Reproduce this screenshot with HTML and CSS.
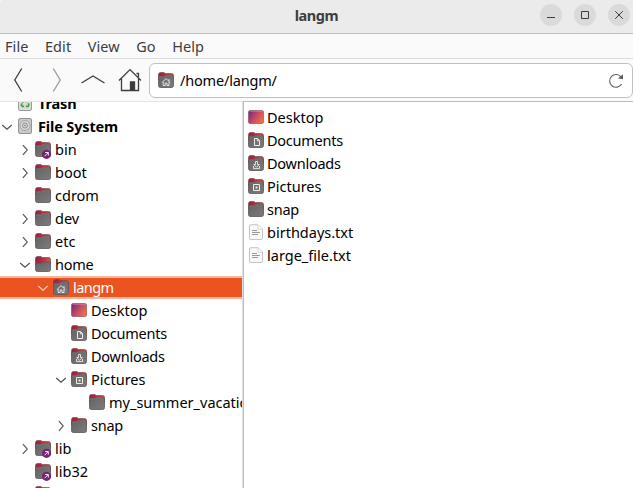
FILE: index.html
```html
<!DOCTYPE html>
<html lang="en">
<head>
<meta charset="utf-8">
<title>langm</title>
<link rel="stylesheet" href="styles.css">
</head>
<body>
<svg class="defs" aria-hidden="true">
  <defs>
    <linearGradient id="g-body" x1="0" y1="0" x2="1" y2="1"><stop offset="0" stop-color="#666164"/><stop offset="1" stop-color="#7c7c7c"/></linearGradient>
    <linearGradient id="g-tab" x1="0" y1="0" x2="1" y2="0"><stop offset="0" stop-color="#8f2148"/><stop offset=".45" stop-color="#b52c40"/><stop offset="1" stop-color="#d4583a"/></linearGradient>
    <linearGradient id="g-desk" x1="0" y1="0.2" x2="1" y2="0.8"><stop offset="0" stop-color="#7b2a78"/><stop offset=".5" stop-color="#cc4a66"/><stop offset="1" stop-color="#f0763f"/></linearGradient>
  </defs>
  <symbol id="folder" viewBox="0 0 16 18">
    <path d="M.5 3Q.5.6 2.3.6H6l1.2 1h6.5q1.8 0 1.8 1.8V8H.5z" fill="url(#g-tab)" stroke="#7b4448" stroke-width=".7"/>
    <path d="M.5 5.4q0-.8.9-.8h4.5l1.4-1.2h6.4q1.8 0 1.8 1.4v8.7q0 2-1.8 2H2.3q-1.8 0-1.8-2z" fill="url(#g-body)" stroke="#5c5759" stroke-width=".8"/>
    <path d="M1.2 5h4.9l1.4-1.2h6.9" fill="none" stroke="#948487" stroke-width=".5"/>
  </symbol>
  <symbol id="folder-open" viewBox="0 0 16 18">
    <path d="M.5 3Q.5.6 2.3.6H6l1.2 1h6.5q1.8 0 1.8 1.8V9H.5z" fill="url(#g-tab)" stroke="#69414a" stroke-width=".7"/>
    <path d="M.5 7.3h5.7l1.4-1h7.9v7.2q0 2-1.8 2H2.3q-1.8 0-1.8-2z" fill="url(#g-body)" stroke="#5c5759" stroke-width=".8"/>
  </symbol>
  <symbol id="home-folder" viewBox="0 0 16 18"><use href="#folder" width="16" height="18"/><path d="M3.9 10.6 8.1 6.6l4.2 4M5.2 10v3.5h2V11h1.8v2.5h2V10M11 7v2" fill="none" stroke="#eee" stroke-width=".9"/></symbol>
  <symbol id="docs" viewBox="0 0 16 18"><use href="#folder" width="16" height="18"/><path d="M6.5 6.5h3l2 2v5h-5zM9.3 6.6v2.2h2.2" fill="none" stroke="#eee"/></symbol>
  <symbol id="downs" viewBox="0 0 16 18"><use href="#folder" width="16" height="18"/><path d="M7.5 6.5h2v3h1.8l-2.8 2.8-2.8-2.8h1.8zM5.5 11v2.6h6V11" fill="none" stroke="#eee" stroke-width=".9"/></symbol>
  <symbol id="pics" viewBox="0 0 16 18"><use href="#folder" width="16" height="18"/><path d="M5.5 6.5h6v6h-6z" fill="none" stroke="#eee" stroke-width="1"/><path d="M7.5 8.5h2v2h-2z" fill="#eee"/></symbol>
  <symbol id="link-folder" viewBox="0 0 16 18"><use href="#folder" width="16" height="18"/><circle cx="11.5" cy="13.3" r="4.6" fill="#772477"/><path d="M9.6 15.2l3.5-3.5M10.2 11.5h3.1v3.1" fill="none" stroke="#fff" stroke-width=".9"/></symbol>
  <symbol id="desk" viewBox="0 0 16 18"><rect x=".5" y="1.5" width="15" height="13" rx="1.6" fill="url(#g-desk)" stroke="#8b4b66" stroke-opacity=".65"/><path d="M1.5 2.4h13" stroke="#fff" stroke-opacity=".25"/></symbol>
  <symbol id="txt" viewBox="0 0 16 18"><path d="M1.5 2q0-1.3 1.3-1.3h7.4l4.3 4.3v9.2q0 1.3-1.3 1.3H2.8q-1.3 0-1.3-1.3z" fill="#f8f8f8" stroke="#c4c4c4"/><path d="M10 1v4.2h4.3" fill="#fff" stroke="#ccc" stroke-width=".8"/><path d="M4 6.5h5M4 8.5h8M4 10.5h6" stroke="#999"/></symbol>
  <symbol id="disk" viewBox="0 0 14 16"><rect x=".5" y=".5" width="13" height="15" rx="1.5" fill="#c9c9c9" stroke="#949494"/><circle cx="7" cy="7.5" r="5" fill="#d8d8d8" stroke="#999" stroke-width=".8"/><circle cx="7" cy="7.5" r="2.6" fill="#ccc" stroke="#888" stroke-width=".8"/><circle cx="7" cy="7.5" r=".8" fill="#888"/></symbol>
  <symbol id="bin" viewBox="0 0 14 16"><rect x=".5" y=".5" width="13" height="15" rx="1.5" fill="#dcdcdc" stroke="#9b9b9b"/><path d="M4.4 7.6 6.1 5.3h2L9.3 7M10.3 8.2l.6 1.7-.9 1.5H7.9M6.1 11.4H4.3L3.3 10l.9-1.7" fill="none" stroke="#3da639" stroke-width="1.6"/></symbol>
  <symbol id="down" viewBox="0 0 12 12"><path d="M1.2 4 6 8.2 10.8 4" fill="none" stroke="currentColor" stroke-width="1.1"/></symbol>
  <symbol id="right" viewBox="0 0 12 12"><path d="M3.9 1.2 8.2 6 3.9 10.8" fill="none" stroke="currentColor" stroke-width="1.1"/></symbol>
</svg>

<header class="titlebar">
  <h1>langm</h1>
  <div class="controls">
    <button aria-label="Minimize"><svg viewBox="0 0 22 22"><path d="M7 13.5h8"/></svg></button>
    <button aria-label="Maximize"><svg viewBox="0 0 22 22"><path d="M7.5 7.5h7v7h-7z"/></svg></button>
    <button aria-label="Close"><svg viewBox="0 0 22 22"><path d="m7.2 7.2 7.6 7.6m0-7.6-7.6 7.6"/></svg></button>
  </div>
</header>
<nav class="menubar"><span>File</span><span>Edit</span><span>View</span><span>Go</span><span>Help</span></nav>
<div class="toolbar">
  <svg class="nav" viewBox="0 0 150 42">
    <path d="M21.7 9.5 14.8 21l6.9 11.5"/>
    <path class="off" d="M53.3 9.5 60.2 21l-6.9 11.5"/>
    <path d="m81.5 24 11.5-7 11.5 7"/>
    <path d="M119 21.5 130 10.6l11 10.9M121.5 19.5v12h17v-12M138.5 18v-3.5h-2"/>
    <path class="door" d="M130.5 31V23h4v8z"/>
  </svg>
  <div class="path">
    <svg class="icon"><use href="#home-folder"/></svg>
    <span>/home/langm/</span>
    <svg class="reload" viewBox="0 0 16 16"><path d="M13.6 11A6.4 6.4 0 1 1 13 3.8"/><path class="head" d="M15 1.2v5l-5-.6z"/></svg>
  </div>
</div>
<main class="panes">
  <ul class="tree">
    <li class="row bold"><i class="tw"></i><svg class="icon drive"><use href="#bin"/></svg><span>Trash</span></li>
    <li class="row bold"><svg class="tw"><use href="#down"/></svg><svg class="icon drive"><use href="#disk"/></svg><span>File System</span></li>
    <li class="row l1"><svg class="tw"><use href="#right"/></svg><svg class="icon"><use href="#link-folder"/></svg><span>bin</span></li>
    <li class="row l1"><svg class="tw"><use href="#right"/></svg><svg class="icon"><use href="#folder"/></svg><span>boot</span></li>
    <li class="row l1"><i class="tw"></i><svg class="icon"><use href="#folder"/></svg><span>cdrom</span></li>
    <li class="row l1"><svg class="tw"><use href="#right"/></svg><svg class="icon"><use href="#folder"/></svg><span>dev</span></li>
    <li class="row l1"><svg class="tw"><use href="#right"/></svg><svg class="icon"><use href="#folder"/></svg><span>etc</span></li>
    <li class="row l1"><svg class="tw"><use href="#down"/></svg><svg class="icon"><use href="#folder-open"/></svg><span class="snug">home</span></li>
    <li class="row l2 selected"><svg class="tw"><use href="#down"/></svg><svg class="icon"><use href="#home-folder"/></svg><span class="tight">langm</span></li>
    <li class="row l3"><i class="tw"></i><svg class="icon"><use href="#desk"/></svg><span>Desktop</span></li>
    <li class="row l3"><i class="tw"></i><svg class="icon"><use href="#docs"/></svg><span class="snug">Documents</span></li>
    <li class="row l3"><i class="tw"></i><svg class="icon"><use href="#downs"/></svg><span class="snug">Downloads</span></li>
    <li class="row l3"><svg class="tw"><use href="#down"/></svg><svg class="icon"><use href="#pics"/></svg><span>Pictures</span></li>
    <li class="row l4"><i class="tw"></i><svg class="icon"><use href="#folder"/></svg><span>my_summer_vacation</span></li>
    <li class="row l3"><svg class="tw"><use href="#right"/></svg><svg class="icon"><use href="#folder"/></svg><span class="snug">snap</span></li>
    <li class="row l1"><svg class="tw"><use href="#right"/></svg><svg class="icon"><use href="#link-folder"/></svg><span>lib</span></li>
    <li class="row l1"><i class="tw"></i><svg class="icon"><use href="#link-folder"/></svg><span>lib32</span></li>
    <li class="row l1"><i class="tw"></i><svg class="icon"><use href="#link-folder"/></svg></li>
  </ul>
  <ul class="files">
    <li class="row"><svg class="icon"><use href="#desk"/></svg><span>Desktop</span></li>
    <li class="row"><svg class="icon"><use href="#docs"/></svg><span class="snug">Documents</span></li>
    <li class="row"><svg class="icon"><use href="#downs"/></svg><span class="snug">Downloads</span></li>
    <li class="row"><svg class="icon"><use href="#pics"/></svg><span>Pictures</span></li>
    <li class="row"><svg class="icon"><use href="#folder"/></svg><span class="snug">snap</span></li>
    <li class="row"><svg class="icon"><use href="#txt"/></svg><span>birthdays.txt</span></li>
    <li class="row"><svg class="icon"><use href="#txt"/></svg><span>large_file.txt</span></li>
  </ul>
</main>
</body>
</html>
```
FILE: styles.css
```css
* { box-sizing: border-box; }
body {
  margin: 0;
  height: 488px;
  overflow: hidden;
  display: flex;
  flex-direction: column;
  background: #fff;
  color: #000;
  font: 14.5px/23px "Noto Sans", "Open Sans", sans-serif;
}
.defs { position: absolute; width: 0; height: 0; }
ul { margin: 0; padding: 0; list-style: none; }

.titlebar {
  flex: none;
  height: 34px;
  display: grid;
  grid-template-columns: 1fr auto 1fr;
  background: #ebebeb;
  border-bottom: 1px solid #bfbfbf;
  border-top-left-radius: 2px;
}
.titlebar h1 {
  grid-column: 2;
  margin: 0;
  font-size: 14.5px;
  line-height: 30px;
  letter-spacing: -.4px;
  color: #3d3d3d;
}
.controls { display: flex; justify-content: flex-end; gap: 12px; padding: 4px 3px 0 0; }
.controls button {
  width: 22px;
  height: 22px;
  padding: 0;
  border: 0;
  border-radius: 50%;
  background: #dadada;
}
.controls svg { display: block; fill: none; stroke: #3d3d3d; }

.menubar {
  flex: none;
  display: flex;
  gap: 16.5px;
  height: 25px;
  padding-left: 5px;
  background: #fafafa;
  border-bottom: 1px solid #dcdcdc;
  color: #3d3d3d;
  line-height: 25px;
  letter-spacing: .07px;
}

.toolbar { flex: none; display: flex; height: 42px; background: #fafafa; }
.nav { flex: none; width: 150px; height: 42px; margin-right: -1px; fill: none; stroke: #3d3d3d; stroke-width: 1.3; }
.nav .off { stroke: #9c9c9c; }
.nav .door { fill: #3d3d3d; }
.path {
  flex: 1;
  height: 35px;
  margin-top: 4px;
  display: flex;
  align-items: center;
  padding: 0 8px;
  background: #fff;
  border: 1px solid #c0c0c0;
  border-radius: 6px;
}
.path span { flex: 1; margin-left: 6px; letter-spacing: -.18px; }
.reload { width: 16px; height: 16px; fill: none; stroke: #606060; stroke-width: 1.1; }
.reload .head { fill: #606060; stroke: none; }

.panes { flex: 1; min-height: 0; display: flex; }
.tree { width: 243px; overflow: hidden; border-top: 1px solid #e4e4e4; border-right: 1px solid #dedede; }
.tree .row:first-child { margin-top: -10px; }
.files { flex: 1; padding: 4px 0 0 4px; border-left: 1px solid #bdbdbd; border-top: 1px solid #bdbdbd; overflow: hidden; }
.row { display: flex; height: 23px; padding-left: 1px; white-space: nowrap; }
.files .row { padding-left: 0; }
.icon { flex: none; width: 16px; height: 18px; margin: 3px 4px 0 0; }
.drive { width: 14px; height: 16px; margin-right: 6px; }
.files .icon { margin-right: 3px; }
.path .icon { margin: 1px 0 0; }
.tw { flex: none; width: 12px; height: 12px; margin: 6px 5px 0 0; color: #4c4c4c; }
.bold { font-weight: 700; letter-spacing: -.15px; }
.snug { letter-spacing: -.25px; }
.tight { letter-spacing: -.55px; }
.l1 { padding-left: 19px; }
.l2 { padding-left: 37px; }
.l3 { padding-left: 55px; }
.l4 { padding-left: 73px; }
.l1 .tw, .l2 .tw, .l3 .tw, .l4 .tw { margin-right: 4px; }
.selected { background: #e95420; color: #fff; border-top: 2px solid #f5b69f; border-bottom: 2px solid #f5b69f; line-height: 19px; }
.selected .icon { margin-top: 1px; }
.selected .tw { margin-top: 4px; color: #fbd5c8; }
```
